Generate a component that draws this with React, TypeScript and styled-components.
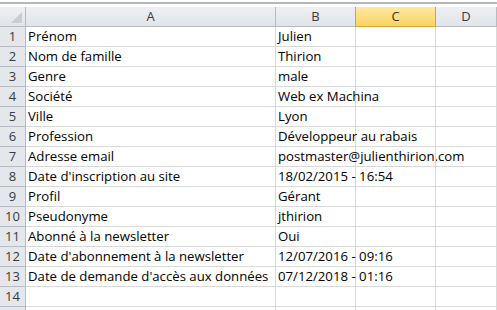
import { Fragment } from "react";
import styled, { createGlobalStyle } from "styled-components";

const GlobalStyle = createGlobalStyle`
  html, body {
    margin: 0;
    background: #ffffff;
  }
  body {
    font-family: "Open Sans", "Liberation Sans", sans-serif;
  }
`;

const gridLine = "#d9d9d9";
const headerBorder = "#b8bcc2";

const Page = styled.div`
  width: 497px;
  height: 310px;
  overflow: hidden;
  background: #ffffff;
`;

const TopStrip = styled.div`
  height: 7px;
  display: flex;
  align-items: flex-start;
  box-sizing: border-box;
  border-top: 2px solid #ffffff;
`;

const StripLine = styled.div`
  flex: 1;
  height: 2px;
  background: #b4b8bd;
`;

const Sheet = styled.div`
  display: grid;
  grid-template-columns: 26px 250px 80px 80px 61px;
  grid-auto-rows: 20px;
`;

const Corner = styled.div`
  position: relative;
  box-sizing: border-box;
  background: linear-gradient(#eef0f3, #e1e4e8);
  border-right: 1px solid ${headerBorder};
  border-bottom: 1px solid ${headerBorder};
`;

const CornerMark = styled.div`
  position: absolute;
  right: 3px;
  bottom: 3px;
  width: 0;
  height: 0;
  border-left: 11px solid transparent;
  border-bottom: 11px solid #c9cdd2;
`;

const ColHeader = styled.div<{ $active?: boolean }>`
  box-sizing: border-box;
  display: flex;
  align-items: flex-end;
  justify-content: center;
  padding-bottom: 1px;
  font-family: "Open Sans", "Liberation Sans", sans-serif;
  font-size: 13px;
  color: ${(p) => (p.$active ? "#3a3220" : "#363b42")};
  background: ${(p) =>
    p.$active
      ? "linear-gradient(#fde9a5, #fcd35f)"
      : "linear-gradient(#eef0f3, #e1e4e8)"};
  border-right: 1px solid ${(p) => (p.$active ? "#d9a33c" : headerBorder)};
  border-bottom: 1px solid ${(p) => (p.$active ? "#d9a33c" : headerBorder)};
  ${(p) => (p.$active ? "border-left: 1px solid #d9a33c; margin-left: -1px;" : "")}
`;

const RowHeader = styled.div`
  box-sizing: border-box;
  display: flex;
  align-items: flex-end;
  justify-content: center;
  padding-bottom: 1px;
  font-family: "Open Sans", "Liberation Sans", sans-serif;
  font-size: 13px;
  color: #363b42;
  background: #e4e7eb;
  border-right: 1px solid ${headerBorder};
  border-bottom: 1px solid ${headerBorder};
`;

const Cell = styled.div`
  box-sizing: border-box;
  display: flex;
  align-items: flex-end;
  padding: 0 0 1px 2px;
  white-space: nowrap;
  font-family: "Open Sans", "Liberation Sans", sans-serif;
  font-size: 13.2px;
  color: #000000;
  border-right: 1px solid ${gridLine};
  border-bottom: 1px solid ${gridLine};
`;

const rows: [string, string][] = [
  ["Prénom", "Julien"],
  ["Nom de famille", "Thirion"],
  ["Genre", "male"],
  ["Société", "Web ex Machina"],
  ["Ville", "Lyon"],
  ["Profession", "Développeur au rabais"],
  ["Adresse email", "postmaster@julienthirion.com"],
  ["Date d'inscription au site", "18/02/2015 - 16:54"],
  ["Profil", "Gérant"],
  ["Pseudonyme", "jthirion"],
  ["Abonné à la newsletter", "Oui"],
  ["Date d'abonnement à la newsletter", "12/07/2016 - 09:16"],
  ["Date de demande d'accès aux données", "07/12/2018 - 01:16"],
  ["", ""],
  ["", ""],
];

export default function App() {
  return (
    <Page>
      <GlobalStyle />
      <TopStrip>
        <StripLine />
      </TopStrip>
      <Sheet>
        <Corner>
          <CornerMark />
        </Corner>
        <ColHeader>A</ColHeader>
        <ColHeader>B</ColHeader>
        <ColHeader $active>C</ColHeader>
        <ColHeader>D</ColHeader>
        {rows.map(([label, value], i) => (
          <Fragment key={i}>
            <RowHeader>{i < 14 ? i + 1 : ""}</RowHeader>
            <Cell>{label}</Cell>
            <Cell>{value}</Cell>
            <Cell />
            <Cell />
          </Fragment>
        ))}
      </Sheet>
    </Page>
  );
}
